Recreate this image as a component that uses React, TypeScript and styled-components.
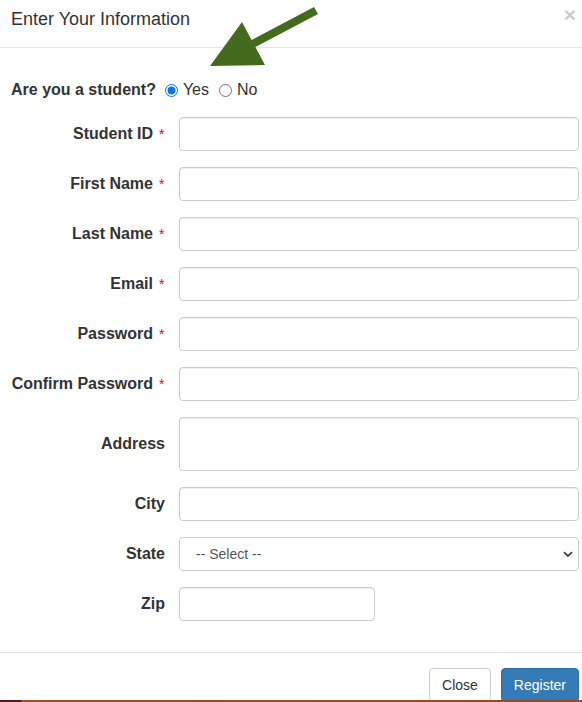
import React from "react";
import styled, { createGlobalStyle } from "styled-components";

const GlobalStyle = createGlobalStyle`
  html, body {
    margin: 0;
    padding: 0;
    background: #fff;
    overflow: hidden;
  }
  * {
    box-sizing: border-box;
  }
`;

const Page = styled.div`
  position: relative;
  width: 582px;
  height: 702px;
  overflow: hidden;
  font-family: "Liberation Sans", Arial, sans-serif;
  color: #333;
  background: #fff;
`;

const Header = styled.div`
  display: flex;
  align-items: flex-start;
  justify-content: space-between;
  padding: 9px 6px 18px 11px;
  border-bottom: 1px solid #e5e5e5;
`;

const Title = styled.h4`
  margin: 0;
  font-size: 18px;
  line-height: 20px;
  font-weight: 400;
  color: #333;
`;

const CloseX = styled.button`
  border: none;
  background: transparent;
  padding: 0;
  margin-top: -5px;
  font-family: "Liberation Sans", Arial, sans-serif;
  font-size: 21px;
  line-height: 21px;
  font-weight: 700;
  color: #000;
  opacity: 0.2;
  cursor: pointer;
`;

const Body = styled.div`
  padding: 32px 3px 15px 11px;
`;

const StudentRow = styled.div`
  display: flex;
  align-items: center;
  height: 20px;
  font-size: 16px;
  line-height: 20px;
  margin-bottom: 17px;
`;

const Question = styled.span`
  font-weight: 700;
  margin-right: 9px;
`;

const Radio = styled.input`
  width: 13px;
  height: 13px;
  margin: 0 5px 0 0;
`;

const RadioText = styled.label<{ gap?: number }>`
  margin-right: ${(p) => p.gap || 0}px;
`;

const FormRow = styled.div`
  display: grid;
  grid-template-columns: 154px 1fr;
  column-gap: 14px;
  align-items: center;
  margin-bottom: 16px;
`;

const Label = styled.label`
  text-align: right;
  font-size: 16px;
  font-weight: 700;
  line-height: 20px;
  color: #333;
  white-space: nowrap;
`;

const Star = styled.span`
  display: inline-block;
  width: 6px;
  margin-left: 6px;
  color: #e00;
  font-size: 14px;
  font-weight: 400;
  text-align: left;
`;

const Field = styled.input<{ w?: number }>`
  display: block;
  width: ${(p) => (p.w ? `${p.w}px` : "100%")};
  height: 34px;
  padding: 6px 12px;
  font-size: 14px;
  font-family: inherit;
  color: #555;
  background: #fff;
  border: 1px solid #ccc;
  border-radius: 4px;
  box-shadow: inset 0 1px 1px rgba(0, 0, 0, 0.075);
`;

const Area = styled.textarea`
  display: block;
  width: 100%;
  height: 54px;
  padding: 6px 12px;
  font-size: 14px;
  font-family: inherit;
  border: 1px solid #ccc;
  border-radius: 4px;
  resize: none;
  box-shadow: inset 0 1px 1px rgba(0, 0, 0, 0.075);
`;

const SelectWrap = styled.div`
  position: relative;
`;

const Select = styled.select`
  display: block;
  width: 100%;
  height: 34px;
  padding: 6px 12px 6px 16px;
  font-size: 14px;
  font-family: "Liberation Sans", Arial, sans-serif;
  color: #555;
  background: #fff;
  border: 1px solid #ccc;
  border-radius: 4px;
  appearance: none;
  -webkit-appearance: none;
`;

const Chevron = styled.svg`
  position: absolute;
  right: 6px;
  top: 14px;
  pointer-events: none;
`;

const Footer = styled.div`
  display: flex;
  justify-content: flex-end;
  gap: 10px;
  padding: 15px 3px 0 0;
  border-top: 1px solid #e5e5e5;
`;

const Button = styled.button<{ primary?: boolean }>`
  height: 34px;
  padding: 6px 12px;
  font-size: 14px;
  line-height: 20px;
  font-family: "Liberation Sans", Arial, sans-serif;
  border-radius: 4px;
  border: 1px solid ${(p) => (p.primary ? "#2e6da4" : "#ccc")};
  background: ${(p) => (p.primary ? "#337ab7" : "#fff")};
  color: ${(p) => (p.primary ? "#fff" : "#333")};
`;

const Arrow = styled.svg`
  position: absolute;
  left: 0;
  top: 0;
  pointer-events: none;
`;

const BottomEdge = styled.div`
  position: absolute;
  left: 0;
  right: 0;
  bottom: 0;
  height: 2px;
  background: linear-gradient(
    to right,
    #5a1822 0,
    #5a1822 21px,
    #a24f22 22px,
    #9a4a1c 100%
  );
`;

const fields = [
  { label: "Student ID", req: true },
  { label: "First Name", req: true },
  { label: "Last Name", req: true },
  { label: "Email", req: true, type: "email" },
  { label: "Password", req: true, type: "password" },
  { label: "Confirm Password", req: true, type: "password" },
];

export default function App() {
  return (
    <Page>
      <GlobalStyle />
      <Header>
        <Title>Enter Your Information</Title>
        <CloseX aria-label="Close">×</CloseX>
      </Header>
      <Body>
        <StudentRow>
          <Question>Are you a student?</Question>
          <Radio type="radio" name="student" id="yes" defaultChecked />
          <RadioText htmlFor="yes" gap={10}>
            Yes
          </RadioText>
          <Radio type="radio" name="student" id="no" />
          <RadioText htmlFor="no">No</RadioText>
        </StudentRow>

        {fields.map((f) => (
          <FormRow key={f.label}>
            <Label>
              {f.label}
              {f.req && <Star>*</Star>}
            </Label>
            <Field type={f.type || "text"} />
          </FormRow>
        ))}

        <FormRow>
          <Label>Address</Label>
          <Area />
        </FormRow>
        <FormRow>
          <Label>City</Label>
          <Field type="text" />
        </FormRow>
        <FormRow>
          <Label>State</Label>
          <SelectWrap>
            <Select defaultValue="">
              <option value="">-- Select --</option>
            </Select>
            <Chevron width="10" height="7" viewBox="0 0 10 7">
              <path d="M1 1.2 L5 5 L9 1.2" fill="none" stroke="#444" strokeWidth="1.8" />
            </Chevron>
          </SelectWrap>
        </FormRow>
        <FormRow>
          <Label>Zip</Label>
          <Field type="text" w={196} />
        </FormRow>
      </Body>
      <Footer>
        <Button>Close</Button>
        <Button primary>Register</Button>
      </Footer>

      <Arrow width="330" height="80" viewBox="0 0 330 80">
        <polygon
          points="210,66 242,22 251.6,40 314,7 318,14 255.4,47 265,65"
          fill="#436b1d"
        />
      </Arrow>
      <BottomEdge />
    </Page>
  );
}
